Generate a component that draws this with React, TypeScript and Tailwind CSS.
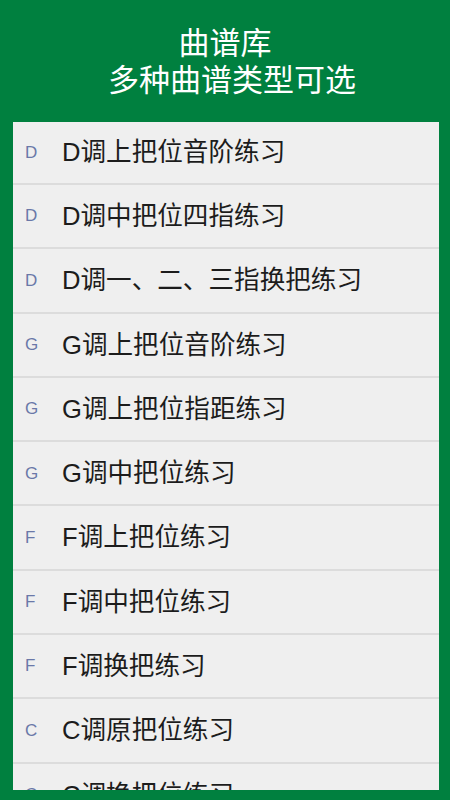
import React from 'react'

// 曲谱库 list: key letter + title per row
const ITEMS: { key: string; title: string }[] = [
  { key: 'D', title: 'D调上把位音阶练习' },
  { key: 'D', title: 'D调中把位四指练习' },
  { key: 'D', title: 'D调一、二、三指换把练习' },
  { key: 'G', title: 'G调上把位音阶练习' },
  { key: 'G', title: 'G调上把位指距练习' },
  { key: 'G', title: 'G调中把位练习' },
  { key: 'F', title: 'F调上把位练习' },
  { key: 'F', title: 'F调中把位练习' },
  { key: 'F', title: 'F调换把练习' },
  { key: 'C', title: 'C调原把位练习' },
  { key: 'C', title: 'C调换把位练习' },
]

const FONT = { fontFamily: '"Liberation Sans", "Noto Sans CJK SC", sans-serif' }

export default function App() {
  return (
    <div className="w-[450px] h-[800px] bg-[#00803f] flex flex-col overflow-hidden" style={FONT}>
      <div className="h-[122px] shrink-0 flex flex-col items-center pt-[25px] text-white text-[31px] leading-[37px]">
        <div>曲谱库</div>
        <div className="pl-[14px]">多种曲谱类型可选</div>
      </div>

      <div className="ml-[13px] mr-[11px] h-[668px] shrink-0 bg-[#efefef] overflow-hidden">
        {ITEMS.map((it, i) => (
          <div
            key={i}
            className={`flex items-center border-b-2 border-[#dcdcdc] ${i === 0 ? 'h-[63px]' : 'h-[64.3px]'}`}
          >
            <span className="w-[49px] pl-[12px] text-[17px] text-[#6a78a8]">{it.key}</span>
            <span className="text-[25.6px] text-[#1c1c1c]">{it.title}</span>
          </div>
        ))}
      </div>
    </div>
  )
}
